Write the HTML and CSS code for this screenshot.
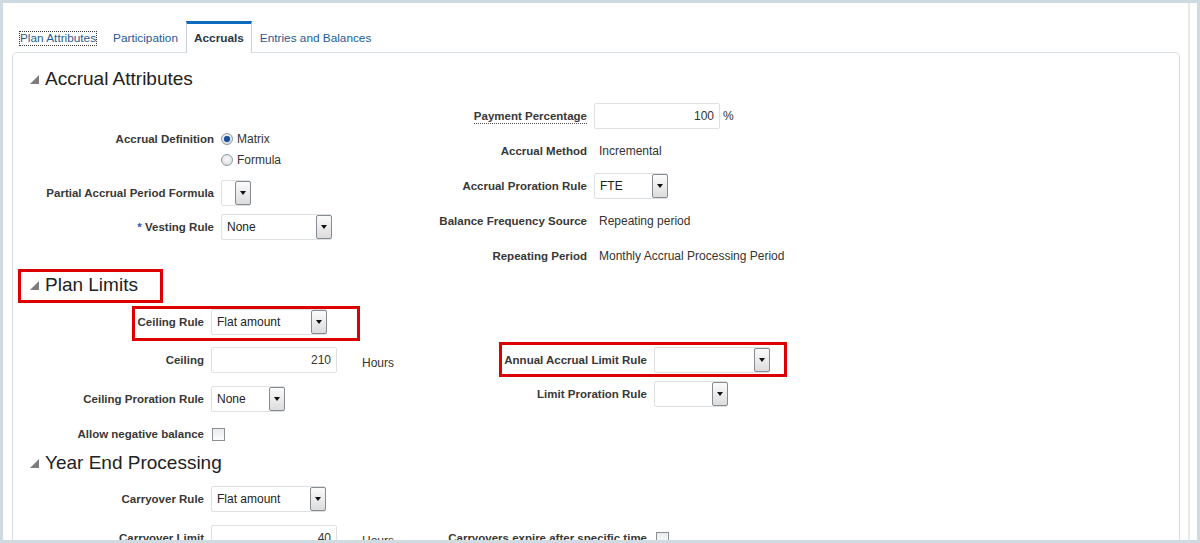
FILE: index.html
```html
<!DOCTYPE html>
<html>
<head>
<meta charset="utf-8">
<link rel="stylesheet" href="styles.css">
</head>
<body>
<div class="frame">
  <div class="page">
    <nav class="tabs">
      <a class="tab"><span class="focus">Plan Attributes</span></a>
      <a class="tab">Participation</a>
      <a class="tab active">Accruals</a>
      <a class="tab">Entries and Balances</a>
    </nav>
    <div class="panel">
      <section class="sec">
        <h2 class="head"><span class="tri"></span>Accrual Attributes</h2>
        <div class="body">
          <div class="col left la pt37">
            <div class="row r21"><span class="lbl">Accrual Definition</span><span class="radio on"></span><span class="val rl">Matrix</span></div>
            <div class="row r21"><span class="lbl"></span><span class="radio"></span><span class="val rl">Formula</span></div>
            <div class="row mt10"><span class="lbl">Partial Accrual Period Formula</span><span class="sel w30"><span class="btn"></span></span></div>
            <div class="row mt8"><span class="lbl"><span class="req">*</span> Vesting Rule</span><span class="sel w111"><span class="txt">None</span><span class="btn"></span></span></div>
          </div>
          <div class="col right ra pt12 g9">
            <div class="row"><span class="lbl"><span class="help">Payment Percentage</span></span><span class="inp">100</span><span class="val pct">%</span></div>
            <div class="row"><span class="lbl">Accrual Method</span><span class="val vl">Incremental</span></div>
            <div class="row"><span class="lbl">Accrual Proration Rule</span><span class="sel w74"><span class="txt">FTE</span><span class="btn"></span></span></div>
            <div class="row"><span class="lbl">Balance Frequency Source</span><span class="val vl">Repeating period</span></div>
            <div class="row"><span class="lbl">Repeating Period</span><span class="val vl">Monthly Accrual Processing Period</span></div>
          </div>
        </div>
      </section>

      <section class="sec mt4">
        <h2 class="head mark m-head"><span class="tri"></span>Plan Limits</h2>
        <div class="body">
          <div class="col left lb pt12 g12">
            <div class="row mark m-ceil"><span class="lbl">Ceiling Rule</span><span class="sel w116"><span class="txt">Flat amount</span><span class="btn"></span></span></div>
            <div class="row"><span class="lbl">Ceiling</span><span class="inp">210</span><span class="val unit">Hours</span></div>
            <div class="row mt1"><span class="lbl">Ceiling Proration Rule</span><span class="sel w74"><span class="txt">None</span><span class="btn"></span></span></div>
            <div class="row cbrow"><span class="lbl">Allow negative balance</span><span class="check"></span></div>
          </div>
          <div class="col right rb pt50">
            <div class="row mark m-annual"><span class="lbl">Annual Accrual Limit Rule</span><span class="sel w116"><span class="btn"></span></span></div>
            <div class="row mt8"><span class="lbl">Limit Proration Rule</span><span class="sel w74"><span class="btn"></span></span></div>
          </div>
        </div>
      </section>

      <section class="sec mt7">
        <h2 class="head"><span class="tri"></span>Year End Processing</h2>
        <div class="body">
          <div class="col left lb pt11">
            <div class="row"><span class="lbl">Carryover Rule</span><span class="sel w115"><span class="txt">Flat amount</span><span class="btn"></span></span></div>
            <div class="row mt13"><span class="lbl">Carryover Limit</span><span class="inp">40</span><span class="val unit">Hours</span></div>
          </div>
          <div class="col right rb pt50">
            <div class="row"><span class="lbl">Carryovers expire after specific time</span><span class="check cx"></span></div>
          </div>
        </div>
      </section>
    </div>
  </div>
</div>
</body>
</html>
```

FILE: styles.css
```css
*, *::before, *::after { box-sizing: border-box; }
html, body { margin: 0; padding: 0; }
body {
  background: #cfdbe0;
  font-family: "Liberation Sans", Arial, sans-serif;
  color: #333;
  width: 1200px;
  height: 543px;
  overflow: hidden;
}
.frame {
  margin: 3px;
  height: 537px;
  background: #fff;
  display: flex;
  padding-right: 7px;
  overflow: hidden;
}
.page {
  flex: 1;
  border-right: 2px solid #e6eaec;
  padding: 18px 8px 0 9px;
  display: flex;
  flex-direction: column;
}
.tabs {
  display: flex;
  height: 31px;
  font-size: 11.8px;
}
.tab {
  display: flex;
  align-items: center;
  padding: 0 7px;
  border: 1px solid transparent;
  border-top-width: 3px;
  border-bottom: 0;
  color: #1f5b93;
  white-space: nowrap;
}
.tab.active {
  border-color: #c9d2d8;
  border-top-color: #0d6cc0;
  background: #fff;
  color: #2a3645;
  font-weight: bold;
  position: relative;
  z-index: 1;
  margin-bottom: -1px;
  height: 32px;
  padding-bottom: 1px;
}
.focus {
  border: 1px dotted #3a3a3a;
  line-height: 13px;
  padding: 0;
  margin-left: -1px;
}
.panel {
  flex: 1;
  border: 1px solid #d8dfe4;
  border-bottom: 0;
  border-radius: 5px 5px 0 0;
  padding: 14px 17px 0 17px;
}
.sec { display: block; }
.head {
  margin: 0;
  display: flex;
  align-items: center;
  width: fit-content;
  height: 24px;
  font-size: 19px;
  font-weight: normal;
  color: #222;
  white-space: nowrap;
}
.tri {
  width: 0;
  height: 0;
  border-left: 9px solid transparent;
  border-bottom: 9px solid #7d7d7d;
  margin-right: 6px;
  margin-top: 1px;
}
.body { display: flex; align-items: flex-start; }
.col { display: flex; flex-direction: column; }
.col.left { width: 400px; flex: none; }
.row {
  display: flex;
  align-items: center;
  height: 26px;
  white-space: nowrap;
}
.row.r21 { height: 21px; }
.row.cbrow { height: 20px; }
.lbl {
  flex: none;
  text-align: right;
  font-size: 11.5px;
  font-weight: bold;
  color: #383838;
  padding-right: 7px;
}
.la .lbl { width: 191px; }
.lb .lbl { width: 181px; }
.ra .lbl { width: 164px; }
.rb .lbl { width: 224px; }
.req { color: #2460a8; font-weight: bold; }
.help { border-bottom: 1px dotted #555; padding-bottom: 1px; }
.val { font-size: 12px; color: #333; }
.vl { padding-left: 5px; }
.rl { padding-left: 4px; }
.pct { margin-left: 3px; align-self: flex-start; padding-top: 6px; }
.unit { margin-left: 25px; padding-top: 6px; }

.inp {
  width: 126px;
  height: 26px;
  border: 1px solid #dde1e4;
  border-radius: 2px;
  background: #fff;
  font-size: 12px;
  text-align: right;
  padding-right: 5px;
  line-height: 24px;
  color: #333;
}
.sel {
  position: relative;
  height: 26px;
  border: 1px solid #dde1e4;
  border-radius: 2px;
  background: #fff;
  display: flex;
  align-items: center;
  font-size: 12px;
}
.sel .txt { padding-left: 5px; color: #222; }
.sel .btn {
  margin-left: auto;
  width: 16px;
  height: 24px;
  margin-right: -1px;
  border: 1px solid #858b90;
  border-radius: 2px;
  background: linear-gradient(#fbfbfb, #dcdcdc);
  display: flex;
  align-items: center;
  justify-content: center;
}
.sel .btn::before {
  content: "";
  width: 0;
  height: 0;
  border-left: 3px solid transparent;
  border-right: 3px solid transparent;
  border-top: 4px solid #111;
}
.w30 { width: 30px; }
.w74 { width: 74px; }
.w111 { width: 111px; }
.w115 { width: 115px; }
.w116 { width: 116px; }

.radio {
  width: 12px;
  height: 12px;
  border-radius: 50%;
  border: 1px solid #8e9aa3;
  background: radial-gradient(circle at 50% 40%, #fafafa, #d6d9dc);
  display: flex;
  align-items: center;
  justify-content: center;
}
.radio.on::before {
  content: "";
  width: 6px;
  height: 6px;
  border-radius: 50%;
  background: #1c4f94;
  box-shadow: 0 0 1px #5b8ccc;
}
.check {
  width: 13px;
  height: 13px;
  border: 1px solid #8a8f93;
  background: linear-gradient(#e9ebec, #fdfdfd);
  margin-left: 1px;
}
.check.cx { margin-left: 2px; }

.mark { position: relative; }
.mark::after {
  content: "";
  position: absolute;
  border: 3px solid #dd0000;
  pointer-events: none;
}
.m-head::after { left: -12px; top: -4px; width: 145px; height: 34px; }
.m-ceil::after { left: 102px; top: -3px; width: 228px; height: 35px; }
.m-annual::after { left: 69px; top: -5px; width: 288px; height: 35px; }

.pt11 { padding-top: 11px; }
.pt12 { padding-top: 12px; }
.pt37 { padding-top: 37px; }
.pt50 { padding-top: 50px; }
.g9 { gap: 9px; }
.g12 { gap: 12px; }
.mt1 { margin-top: 1px; }
.mt4 { margin-top: 4px; }
.mt7 { margin-top: 7px; }
.mt8 { margin-top: 8px; }
.mt10 { margin-top: 10px; }
.mt13 { margin-top: 13px; }
```
